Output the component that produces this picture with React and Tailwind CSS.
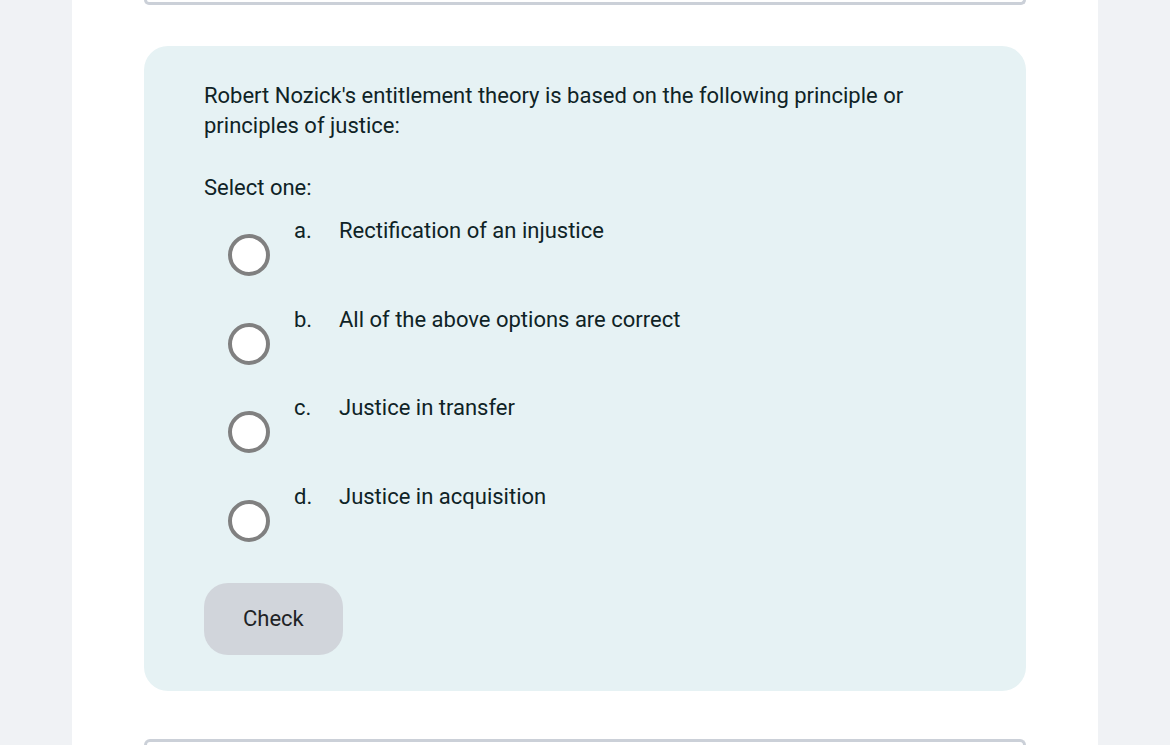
import { useState } from "react";

const options = [
  { key: "a", label: "Rectification of an injustice" },
  { key: "b", label: "All of the above options are correct" },
  { key: "c", label: "Justice in transfer" },
  { key: "d", label: "Justice in acquisition" },
];

export default function App() {
  const [selected, setSelected] = useState(null);

  return (
    <div
      className="min-h-screen bg-[#f0f2f5] flex justify-center"
      style={{ fontFamily: "Roboto, 'Liberation Sans', sans-serif" }}
    >
      <div className="w-[1026px] h-[745px] overflow-hidden bg-white px-[72px]">
        {/* end of previous question */}
        <div className="h-[5px] border-x-[3px] border-b-[3px] border-[#cbd0d8] rounded-b-[6px]" />

        {/* Question card */}
        <div className="mt-[41px] bg-[#e6f2f4] rounded-[24px] px-[60px] pt-[35px] pb-[36px] text-[#0f2326]">
          <p className="text-[22px] leading-[30px]">
            Robert Nozick's entitlement theory is based on the following principle or principles of justice:
          </p>

          <p className="mt-[32px] text-[22px] leading-[30px]">Select one:</p>

          <div className="mt-[13px] flex flex-col">
            {options.map((opt) => (
              <label
                key={opt.key}
                className="flex items-start h-[88.7px] cursor-pointer"
                onClick={() => setSelected(opt.key)}
              >
                <span
                  className={`mt-[18px] ml-[24px] w-[42px] h-[42px] rounded-full border-[4px] bg-white shrink-0 flex items-center justify-center ${
                    selected === opt.key ? "border-[#0f6cbf]" : "border-[#808080]"
                  }`}
                >
                  {selected === opt.key && (
                    <span className="w-[18px] h-[18px] rounded-full bg-[#0f6cbf]" />
                  )}
                </span>
                <span className="ml-[24px] w-[45px] text-[22px] leading-[30px]">{opt.key}.</span>
                <span className="text-[22px] leading-[30px]">{opt.label}</span>
              </label>
            ))}
          </div>

          <button className="mt-[12px] h-[72px] px-[39px] rounded-[24px] bg-[#d1d5db] text-[22px] text-[#1f2326]">
            Check
          </button>
        </div>

        {/* start of next question */}
        <div className="mt-[48px] h-[40px] border-x-[3px] border-t-[3px] border-[#cbd0d8] rounded-t-[6px]" />
      </div>
    </div>
  );
}
